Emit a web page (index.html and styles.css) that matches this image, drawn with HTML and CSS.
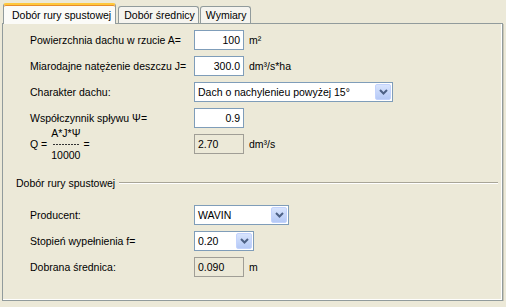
FILE: index.html
```html
<!DOCTYPE html>
<html lang="pl">
<head>
    <meta charset="UTF-8">
    <meta name="viewport" content="width=device-width, initial-scale=1.0">
    <title>Dobór rury spustowej</title>
    <link rel="stylesheet" href="styles.css">
</head>
<body>
    <div class="tabs">
        <div class="tab active">Dobór rury spustowej</div>
        <div class="tab">Dobór średnicy</div>
        <div class="tab">Wymiary</div>
    </div>

    <div class="panel">
        <div class="row">
            <span class="label">Powierzchnia dachu w rzucie A=</span>
            <span class="field num">100</span>
            <span class="unit">m²</span>
        </div>
        <div class="row">
            <span class="label">Miarodajne natężenie deszczu J=</span>
            <span class="field num">300.0</span>
            <span class="unit">dm³/s*ha</span>
        </div>
        <div class="row">
            <span class="label">Charakter dachu:</span>
            <span class="combo wide">
                <span class="combo-text">Dach o nachylenieu powyżej 15°</span>
                <span class="combo-btn"><svg width="9" height="6" viewBox="0 0 9 6"><path d="M1 1 L4.5 4.5 L8 1" fill="none" stroke="#4d6185" stroke-width="2"/></svg></span>
            </span>
        </div>
        <div class="row">
            <span class="label">Współczynnik spływu Ψ=</span>
            <span class="field num">0.9</span>
        </div>
        <div class="row">
            <span class="label formula">
                <span>Q =</span>
                <span class="fraction">
                    <span>A*J*Ψ</span>
                    <span class="dashes"></span>
                    <span>10000</span>
                </span>
                <span>=</span>
            </span>
            <span class="field readonly">2.70</span>
            <span class="unit">dm³/s</span>
        </div>

        <div class="group-title">
            <span>Dobór rury spustowej</span>
            <span class="group-line"></span>
        </div>

        <div class="row">
            <span class="label">Producent:</span>
            <span class="combo medium">
                <span class="combo-text">WAVIN</span>
                <span class="combo-btn"><svg width="9" height="6" viewBox="0 0 9 6"><path d="M1 1 L4.5 4.5 L8 1" fill="none" stroke="#4d6185" stroke-width="2"/></svg></span>
            </span>
        </div>
        <div class="row">
            <span class="label">Stopień wypełnienia f=</span>
            <span class="combo small">
                <span class="combo-text">0.20</span>
                <span class="combo-btn"><svg width="9" height="6" viewBox="0 0 9 6"><path d="M1 1 L4.5 4.5 L8 1" fill="none" stroke="#4d6185" stroke-width="2"/></svg></span>
            </span>
        </div>
        <div class="row">
            <span class="label">Dobrana średnica:</span>
            <span class="field readonly">0.090</span>
            <span class="unit">m</span>
        </div>
    </div>
</body>
</html>
```

FILE: styles.css
```css
body {
    margin: 0;
    background: #ece9d8;
    font-family: "Liberation Sans", Arial, sans-serif;
    font-size: 10.5px;
    color: #000;
}

.tabs {
    display: flex;
    align-items: flex-end;
    padding: 3px 0 0 3px;
    height: 20px;
}

.tab {
    height: 16px;
    line-height: 16px;
    padding: 0 3px 0 5px;
    margin-right: 1px;
    border: 1px solid #919b9c;
    border-bottom: none;
    border-radius: 3px 3px 0 0;
    background: #f5f4ef;
}

.tab.active {
    position: relative;
    z-index: 1;
    height: 19px;
    line-height: 20px;
    padding: 0 4px 0 8px;
    margin-right: 2px;
    margin-bottom: -1px;
    border-top: 2px solid #ffc83c;
    background: #fbfbf8;
    box-shadow: inset 0 1px 0 #e68b2c;
}

.panel {
    margin-left: 2px;
    width: 499px;
    height: 270px;
    padding-top: 6px;
    border: 1px solid #919b9c;
    background: #ece9d8;
    box-shadow: inset -1px -1px 0 #fff, 1px 1px 0 #c9c6b6;
}

.row {
    display: flex;
    align-items: center;
    height: 20px;
    margin-bottom: 6px;
    padding-left: 27px;
}

.label {
    width: 164px;
    white-space: nowrap;
}

.field {
    box-sizing: border-box;
    width: 50px;
    height: 20px;
    line-height: 18px;
    padding: 0 3px;
    border: 1px solid #7f9db9;
    background: #fff;
}

.field.num {
    text-align: right;
}

.field.readonly {
    border-color: #a09e96;
    background: #ece9d8;
}

.unit {
    margin-left: 5px;
}

.formula {
    display: flex;
    align-items: center;
}

.fraction {
    display: flex;
    flex-direction: column;
    align-items: center;
    margin: 0 3px 0 4px;
    line-height: 11px;
}

.fraction .dashes {
    width: 26px;
    height: 1px;
    margin: 5px 0;
    background: repeating-linear-gradient(90deg, #333 0 2px, transparent 2px 3px);
}

.combo {
    box-sizing: border-box;
    display: flex;
    align-items: center;
    height: 20px;
    padding: 0 1px 0 3px;
    border: 1px solid #7f9db9;
    background: #fff;
}

.combo.wide {
    width: 199px;
}

.combo.medium {
    width: 95px;
}

.combo.small {
    width: 60px;
}

.combo-text {
    flex: 1;
    white-space: nowrap;
}

.combo-btn {
    box-sizing: border-box;
    display: flex;
    align-items: center;
    justify-content: center;
    width: 16px;
    height: 16px;
    border: 1px solid #c3d3fd;
    border-radius: 2px;
    background: linear-gradient(#d8e4fd, #b5c9f6);
}

.group-title {
    display: flex;
    align-items: center;
    margin: 22px 0 15px 13px;
    height: 14px;
}

.group-line {
    flex: 1;
    margin: 0 4px 0 4px;
    height: 1px;
    background: #a8a597;
    border-bottom: 1px solid #fff;
}
```
